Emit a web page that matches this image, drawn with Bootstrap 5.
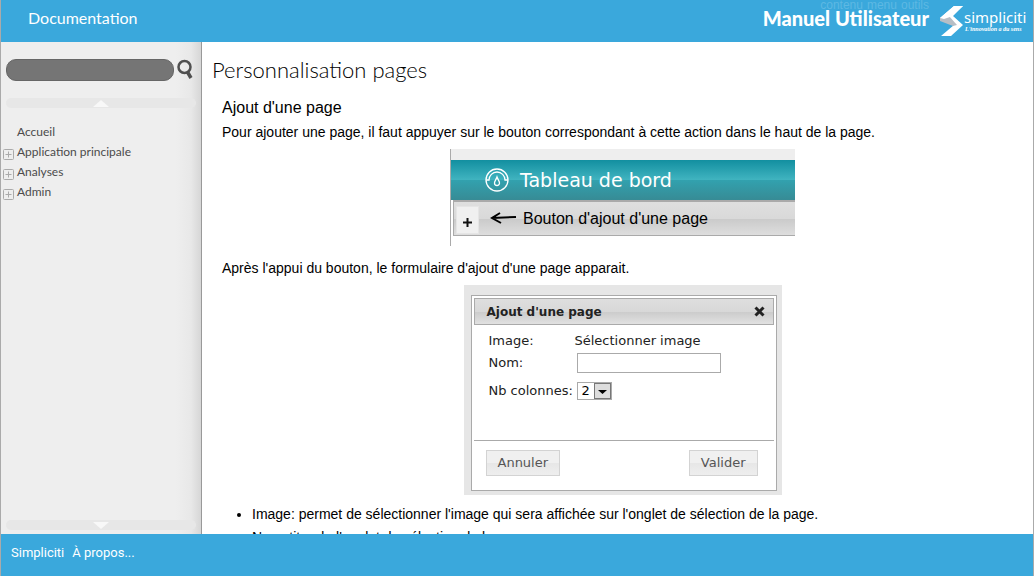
<!DOCTYPE html>
<html lang="fr">
<head>
<meta charset="utf-8">
<meta name="viewport" content="width=device-width, initial-scale=1">
<title>Documentation - Manuel Utilisateur</title>
<link href="https://cdn.jsdelivr.net/npm/bootstrap@5.3.0/dist/css/bootstrap.min.css" rel="stylesheet">
<style>
body{font:14px/20px "Liberation Sans",Arial,sans-serif;color:#000;border:solid #aaa;border-width:0 1px}
a{text-decoration:none}
.bar{height:42px;background:#3aa8dc;color:#fff}
.bar a{color:#fff}
.doc-link{font:16px/20px Lato,sans-serif;padding:8px 27px}
.manual{font:900 20px/24px Lato,sans-serif;padding-top:6px}
.shortcuts{top:-2px;right:104px;font-size:12px;line-height:14px}
.bar .shortcuts a{color:#5db8e3}
.logo{margin:5px 5px 0 10px}
.side{width:201px;background:linear-gradient(90deg,#eee 175px,#e8e8e8 190px,#d6d6d6);border-right:1px solid #999;padding:17px 5px 4px}
.search{height:22px;border:1px solid #666;border-radius:10px;background:#757575;color:#fff;min-width:0}
.find{width:22px;height:22px;border:0;background:none;padding:0;line-height:0;margin-left:2px}
.scroller{height:10px;border:0;border-radius:5px;background:#e7e7e7;padding:0;line-height:0}
.search-form{margin-bottom:17px}
.tree{font:12px/20px Lato,sans-serif;padding-top:14px;margin-left:-3px}
.tree a{color:#4b4b4b}
.tree li{height:20px;display:flex;align-items:center;gap:3px}
.toggle{width:11px;height:11px;border:0;padding:0;background:none;line-height:0;margin-top:4px}
.content{padding:16px 10px 0}
h1{font:300 22px/24px Lato,sans-serif;margin:0 0 16px}
h2{font-size:16px;line-height:20px;font-weight:400;margin:0 0 4px}
.section{padding:0 0 0 10px}
.verdana{font-family:"DejaVu Sans",Verdana,sans-serif}
.shot-bar{width:345px;height:97px;border-left:1px solid #aaa;margin:7px auto 12px}
.shot-top{height:11px;background:#eee}
.teal{height:40px;background:linear-gradient(#128fa0,#41b4c0 50%,#32a1ae 51%,#378b95);color:#fff;font-size:19px;padding-left:33px;gap:10px}
.tabs{height:36px;margin-left:2px;border:solid #aaa;border-width:2px 0 1px 1px;background:linear-gradient(#dfdfdf,#d9d9d9 50%,#cacaca 51%,#dedede);font-size:16px;padding-left:2px}
.tabs span{line-height:34px;margin-left:6px}
.plus{width:23px;height:28px;border:1px solid #e5e5e5;background:#f0f0f0;padding:4px 0 0;margin-top:4px}
.shot-form{width:318px;height:210px;background:#e6e6e6;padding:10px 5px 4px 7px;margin:7px auto 9px;color:#222;font-size:13px}
.frame{height:196px;border:1px solid #aaa;background:#fff;padding:2px}
.title{height:27px;border:1px solid #aaa;background:linear-gradient(#dedede,#d8d8d8 50%,#cbcbcb 51%,#e1e1e1);font-weight:700;font-size:12px;padding:0 8px 0 12px}
.fields{height:116px;border-bottom:1px solid #aaa;padding:6px 0 0 15px}
.fields label{width:88px;white-space:nowrap}
.lab{width:86px}
.row-nom{margin-top:2px}
.row-cols{margin-top:8px}
.nom{width:144px;height:20px;border:1px solid #aaa;border-radius:0}
.cols{width:35px;height:18px;border:1px solid #aaa;border-radius:0;background:#fff;padding:0 4px;font-size:13px;line-height:16px;appearance:none}
.arrow{right:1px;top:1px;width:17px;height:16px;border:1px solid #777;background:#ddd;pointer-events:none}
.actions{padding:9px 16px 0 12px}
.act{height:26px;border:1px solid #d3d3d3;background:linear-gradient(#f0f0f0 50%,#e7e7e7 51%,#eee);color:#555;padding:0 11px;font-size:13px}
.points{padding-left:30px}
.points li{margin-bottom:3px}
.foot{padding:9px 10px;font:13px/20px Roboto,sans-serif;gap:8px}
</style>
</head>
<body class="vh-100 d-flex flex-column overflow-hidden">
<header class="bar position-relative d-flex flex-shrink-0">
  <a href="#" class="doc-link me-auto">Documentation</a>
  <nav class="shortcuts position-absolute d-flex gap-1" aria-label="Accès rapide"><a href="#contenu">contenu</a><a href="#menu">menu</a><a href="#outils">outils</a></nav>
  <div class="manual position-relative">Manuel Utilisateur</div>
  <svg class="logo" width="89" height="33" viewBox="0 0 89 33" role="img" aria-label="Simpliciti">
    <path d="M1 13 15 1H24L14 11 24 20 12 31H2L15 20 1 15Z" fill="#fff"/><path d="M1 13 10 11 18 20 14 21 1 16Z" fill="#b7bec5"/><path d="M1 13 15 1H24L11 12 5 14Z" fill="#fff"/>
    <text x="25" y="18" font-family="Noto Sans" font-size="15" fill="#fff">simpliciti</text>
    <text x="26" y="26" font-family="Liberation Serif" font-size="6" font-style="italic" font-weight="700" fill="#fff">L'innovation a du sens</text>
  </svg>
</header>
<div class="d-flex flex-grow-1 overflow-hidden">
  <aside class="side d-flex flex-column flex-shrink-0" id="menu">
    <form class="search-form d-flex" role="search">
      <input class="search flex-grow-1" type="search" aria-label="Rechercher">
      <button class="find" type="button" aria-label="Lancer la recherche"><svg width="18" height="22" viewBox="0 0 18 22" fill="none" stroke="#505050"><circle cx="7.500" cy="8" r="6" stroke-width="2.500"/><path d="m10.500 13 3.500 6" stroke-width="3.500"/></svg></button>
    </form>
    <button class="scroller" type="button" aria-label="Défiler vers le haut"><svg width="16" height="7"><path d="M0 7 8 0l8 7Z" fill="#f8f8f8"/></svg></button>
    <ul class="tree list-unstyled mb-auto">
      <li><span class="toggle"></span><a href="#">Accueil</a></li>
      <li><button class="toggle" type="button" aria-label="Déplier Application principale"><svg width="11" height="11" fill="none" stroke="#aaa"><rect x=".5" y=".5" width="10" height="10" rx="1"/><path d="M2.500 5.500h6m-3-3v6"/></svg></button><a href="#">Application principale</a></li>
      <li><button class="toggle" type="button" aria-label="Déplier Analyses"><svg width="11" height="11" fill="none" stroke="#aaa"><rect x=".5" y=".5" width="10" height="10" rx="1"/><path d="M2.500 5.500h6m-3-3v6"/></svg></button><a href="#">Analyses</a></li>
      <li><button class="toggle" type="button" aria-label="Déplier Admin"><svg width="11" height="11" fill="none" stroke="#aaa"><rect x=".5" y=".5" width="10" height="10" rx="1"/><path d="M2.500 5.500h6m-3-3v6"/></svg></button><a href="#">Admin</a></li>
    </ul>
    <button class="scroller" type="button" aria-label="Défiler vers le bas"><svg width="16" height="7"><path d="M0 0h16L8 7Z" fill="#f8f8f8"/></svg></button>
  </aside>
  <main class="content flex-grow-1 overflow-hidden" id="contenu">
    <h1>Personnalisation pages</h1>
    <section class="section">
      <h2>Ajout d'une page</h2>
      <p class="m-0">Pour ajouter une page, il faut appuyer sur le bouton correspondant à cette action dans le haut de la page.</p>
      <div class="shot-bar">
        <div class="shot-top"></div>
        <div class="teal verdana d-flex align-items-center">
          <svg width="26" height="26" viewBox="0 0 26 26" fill="none" stroke="#fff" stroke-width="1.300"><circle cx="13" cy="13" r="11"/><path d="M2 13h3a8 8 0 0 1 16 0h3M13 10c-1 3-2.500 4-2.500 6a2.500 2.500 0 0 0 5 0c0-2-1.500-3-2.500-6Z"/></svg>
          <span>Tableau de bord</span>
        </div>
        <div class="tabs d-flex">
          <button class="plus" type="button" aria-label="Ajouter une page"><svg class="d-block mx-auto" width="9" height="9" stroke="#111" stroke-width="2"><path d="M0 4.500h9M4.500 0v9"/></svg></button>
          <svg class="ms-2 mt-2" width="30" height="16" fill="none" stroke="#000" stroke-width="2"><path d="M5 8 29 7M13 3 5 8l9 5"/></svg>
          <span>Bouton d'ajout d'une page</span>
        </div>
      </div>
      <p class="m-0">Après l'appui du bouton, le formulaire d'ajout d'une page apparait.</p>
      <form class="shot-form verdana">
        <div class="frame">
          <div class="title d-flex align-items-center justify-content-between">Ajout d'une page
            <button type="button" class="border-0 bg-transparent p-0 d-flex" aria-label="Fermer"><svg width="11" height="11" stroke="#222" stroke-width="3"><path d="m1.500 1.500 8 8m0-8-8 8"/></svg></button></div>
          <div class="fields">
            <div class="d-flex"><span class="lab">Image:</span><span>Sélectionner image</span></div>
            <div class="row-nom d-flex align-items-center"><label for="nom">Nom:</label><input id="nom" class="nom" type="text"></div>
            <div class="row-cols d-flex align-items-center"><label for="cols">Nb colonnes:</label><span class="position-relative d-flex"><select id="cols" class="cols"><option>2</option></select><svg class="arrow position-absolute" viewBox="0 0 15 14"><path d="M3 6h9l-4.500 4Z"/></svg></span></div>
          </div>
          <div class="actions d-flex justify-content-between">
            <button class="act" type="button">Annuler</button><button class="act" type="button">Valider</button>
          </div>
        </div>
      </form>
      <ul class="points mb-0">
        <li>Image: permet de sélectionner l'image qui sera affichée sur l'onglet de sélection de la page.</li>
        <li>Nom: titre de l'onglet de sélection de la page.</li>
      </ul>
    </section>
  </main>
</div>
<footer class="bar foot d-flex flex-shrink-0" id="outils"><a href="#">Simpliciti</a><a href="#">À propos...</a></footer>
<script src="https://cdn.jsdelivr.net/npm/bootstrap@5.3.0/dist/js/bootstrap.bundle.min.js"></script>
</body>
</html>
